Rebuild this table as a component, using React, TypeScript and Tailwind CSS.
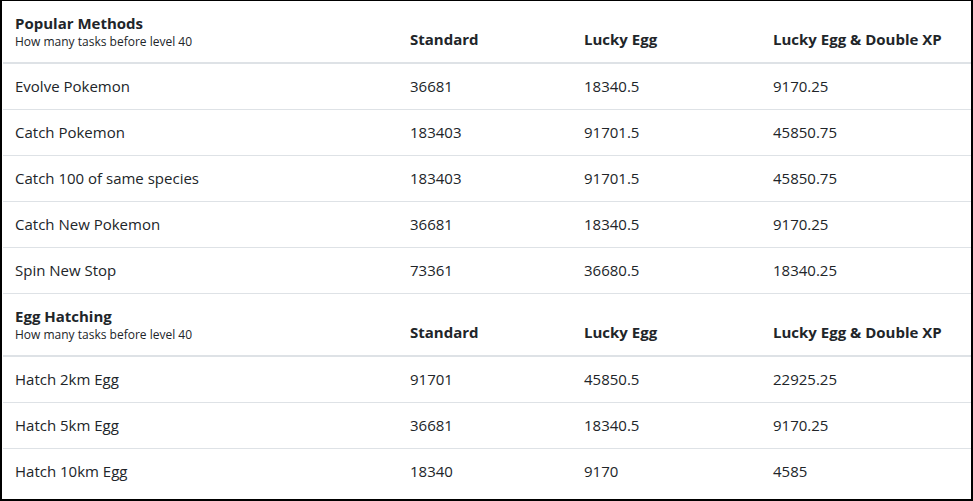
const popular = [
  ["Evolve Pokemon", "36681", "18340.5", "9170.25"],
  ["Catch Pokemon", "183403", "91701.5", "45850.75"],
  ["Catch 100 of same species", "183403", "91701.5", "45850.75"],
  ["Catch New Pokemon", "36681", "18340.5", "9170.25"],
  ["Spin New Stop", "73361", "36680.5", "18340.25"],
];

const eggs = [
  ["Hatch 2km Egg", "91701", "45850.5", "22925.25"],
  ["Hatch 5km Egg", "36681", "18340.5", "9170.25"],
  ["Hatch 10km Egg", "18340", "9170", "4585"],
];

const cols = "grid grid-cols-[395px_174px_189px_207px]";

function HeaderRow({ title, first }: { title: string; first?: boolean }) {
  return (
    <div className={`${cols} border-b-2 border-[#dee2e6] ${first ? "" : "border-t border-t-[#dee2e6]"}`}>
      <div className="px-3 py-3">
        <div className="text-[15px] leading-[21px] font-bold">{title}</div>
        <div className="text-[12px] leading-4">How many tasks before level 40</div>
      </div>
      {["Standard", "Lucky Egg", "Lucky Egg & Double XP"].map((h) => (
        <div key={h} className="px-3 pb-3 flex items-end text-[15px] leading-[21px] font-bold">
          {h}
        </div>
      ))}
    </div>
  );
}

function Rows({ rows }: { rows: string[][] }) {
  return (
    <>
      {rows.map((r, i) => (
        <div key={i} className={`${cols} ${i > 0 ? "border-t border-[#dee2e6]" : ""}`}>
          {r.map((c, j) => (
            <div key={j} className="px-3 py-3 text-[15px] leading-[21px]">
              {c}
            </div>
          ))}
        </div>
      ))}
    </>
  );
}

export default function App() {
  return (
    <div className="w-[973px] h-[501px] bg-white border-2 border-t border-black text-[#212529] font-['Open_Sans',sans-serif] overflow-hidden">
      <div className="pl-px">
        <HeaderRow title="Popular Methods" first />
        <Rows rows={popular} />
        <HeaderRow title="Egg Hatching" />
        <Rows rows={eggs} />
      </div>
    </div>
  );
}
